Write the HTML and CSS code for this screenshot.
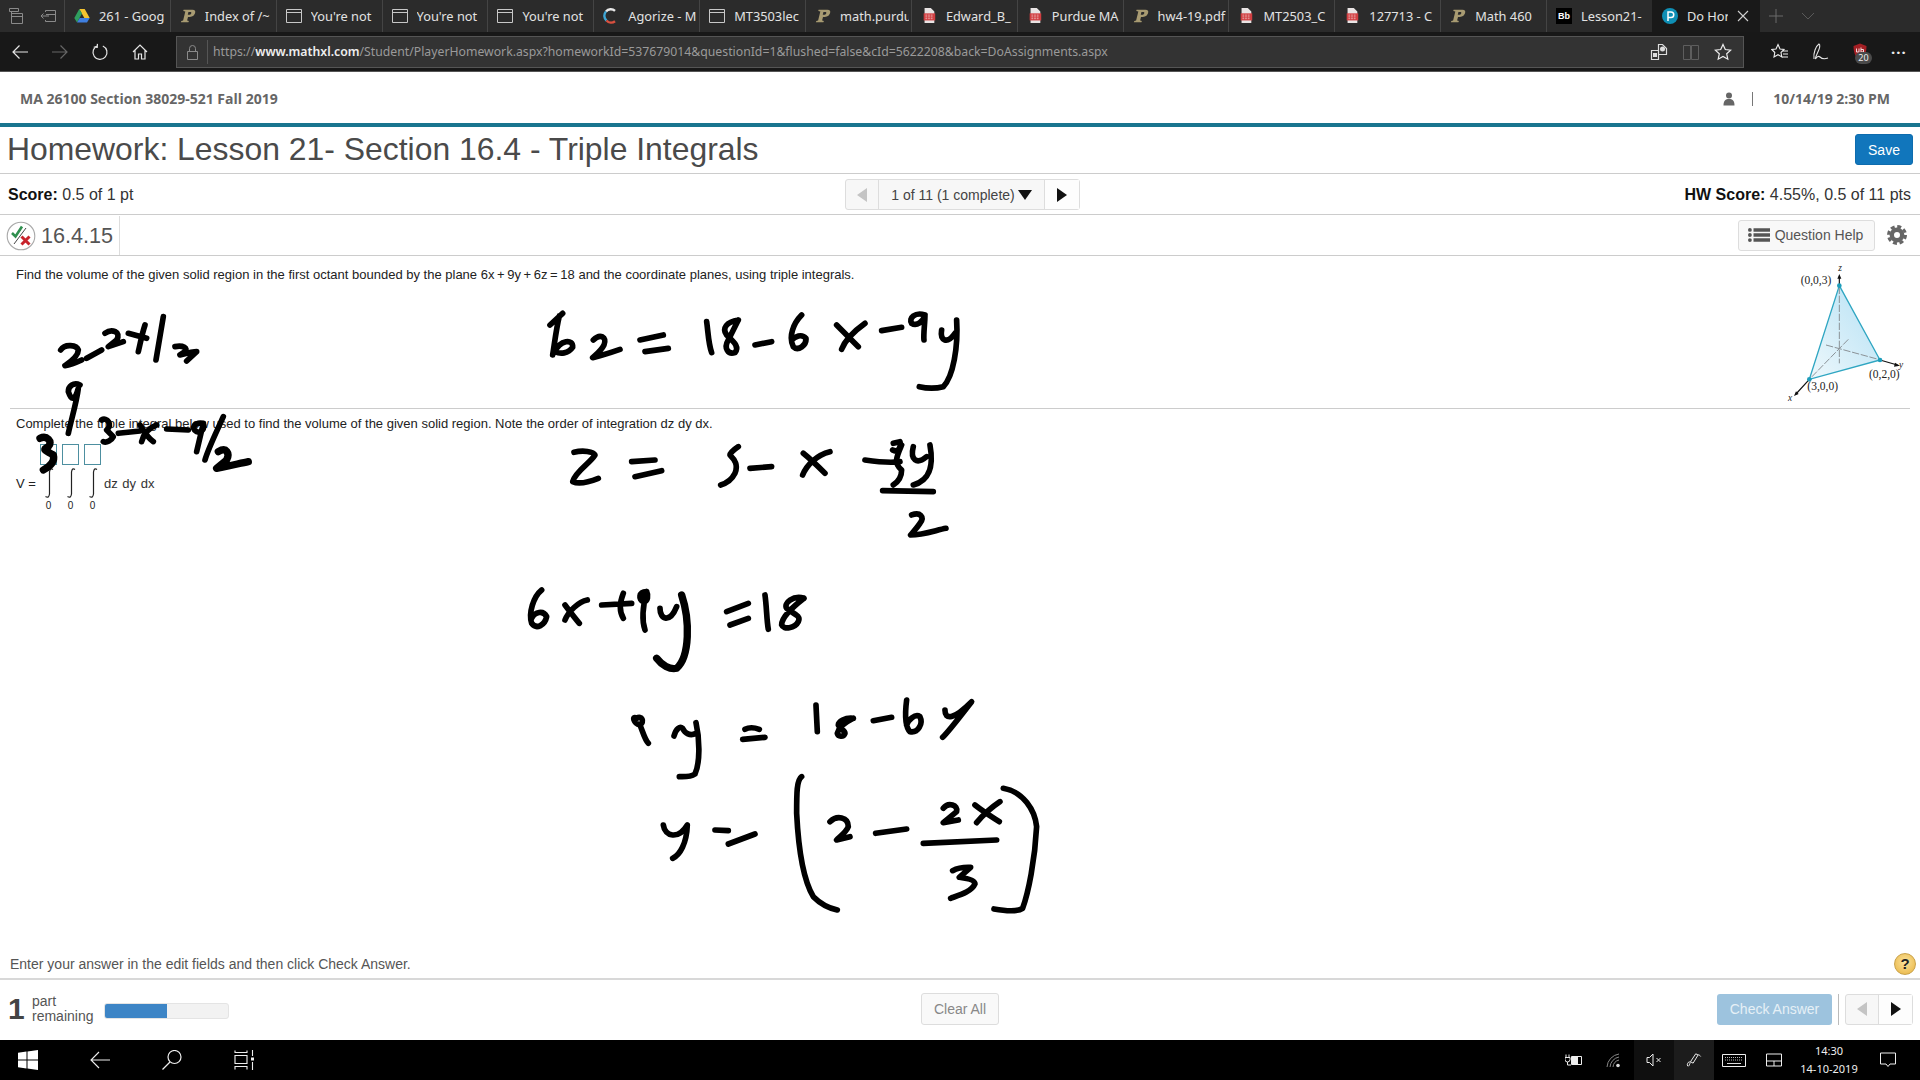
FILE: index.html
```html
<!DOCTYPE html>
<html lang="en">
<head>
<meta charset="utf-8">
<title>Do Homework</title>
<link rel="stylesheet" href="styles.css">
</head>
<body>
<svg class="defs" width="0" height="0" aria-hidden="true">
  <defs>
    <symbol id="i-window" viewBox="0 0 16 16"><path d="M.5 1.500h15v13H.5zM.5 4.500h15" fill="none" stroke="#c8c8c8"/></symbol>
    <symbol id="i-p" viewBox="0 0 18 16"><path d="M4 1h10c3 0 3.500 1.500 3 3.500S14.500 9 11 9H9l-1 4 2 .5-.5 1.500H1l.5-1.500 2 -.5L6 3 3.700 2.500z" fill="#a89b72"/><path d="M9.500 3.500l-.8 3h2.300c1.500 0 2.700-3 .7-3z" fill="#2b2b2b"/></symbol>
    <symbol id="i-pdf" viewBox="0 0 16 18"><path d="M3 0h7l4 4v13H3z" fill="#e9e4e4"/><rect x="2" y="6" width="13" height="8" fill="#d13f42"/><path d="M4 8h9M4 10h9M4 12h9" stroke="#f3c9c9" stroke-width=".8" stroke-dasharray="2 1"/></symbol>
  </defs>
</svg>

<header class="tabbar">
  <div class="tab-tools">
    <svg class="ic16" viewBox="0 0 16 16"><path d="M1.500 .5h9v3h-9zM3.500 3.500v9M3.500 5.500h11v10h-11zM3.500 8.500h11" fill="none" stroke="#8a8a8a"/></svg>
    <svg class="ic16" viewBox="0 0 16 16"><path d="M1 8h8M3.500 5.500L1 8l2.500 2.500M5.500 4V2.500h10v11h-10V12M6 6.500h9" fill="none" stroke="#8a8a8a"/></svg>
  </div>
  <div class="tab"><svg class="tab-ic" viewBox="0 0 16 16"><path d="M5.300 1h5.400l5 9h-5.400z" fill="#f4c430"/><path d="M5.300 1L.3 10l2.700 4.500 5-9z" fill="#2f9e5f"/><path d="M3 14.500h10l2.700-4.500H5.700z" fill="#3f7fe0"/></svg><span class="tab-name">261 - Goog</span></div>
  <div class="tab"><svg class="tab-ic"><use href="#i-p"/></svg><span class="tab-name">Index of /~</span></div>
  <div class="tab"><svg class="tab-ic"><use href="#i-window"/></svg><span class="tab-name">You're not</span></div>
  <div class="tab"><svg class="tab-ic"><use href="#i-window"/></svg><span class="tab-name">You're not</span></div>
  <div class="tab"><svg class="tab-ic"><use href="#i-window"/></svg><span class="tab-name">You're not</span></div>
  <div class="tab"><svg class="tab-ic" viewBox="0 0 16 16"><path d="M12 2.800A6.300 6.300 0 0 0 3 3.500" fill="none" stroke="#e8e8e8" stroke-width="2.400"/><path d="M3 3.500a6.300 6.300 0 0 0 .5 9" fill="none" stroke="#3fa7d6" stroke-width="2.400"/><path d="M3.500 12.500a6.300 6.300 0 0 0 8.500.8" fill="none" stroke="#d9503f" stroke-width="2.400"/></svg><span class="tab-name">Agorize - M</span></div>
  <div class="tab"><svg class="tab-ic"><use href="#i-window"/></svg><span class="tab-name">MT3503lec</span></div>
  <div class="tab"><svg class="tab-ic"><use href="#i-p"/></svg><span class="tab-name">math.purdu</span></div>
  <div class="tab"><svg class="tab-ic"><use href="#i-pdf"/></svg><span class="tab-name">Edward_B_</span></div>
  <div class="tab"><svg class="tab-ic"><use href="#i-pdf"/></svg><span class="tab-name">Purdue MA</span></div>
  <div class="tab"><svg class="tab-ic"><use href="#i-p"/></svg><span class="tab-name">hw4-19.pdf</span></div>
  <div class="tab"><svg class="tab-ic"><use href="#i-pdf"/></svg><span class="tab-name">MT2503_C</span></div>
  <div class="tab"><svg class="tab-ic"><use href="#i-pdf"/></svg><span class="tab-name">127713 - C</span></div>
  <div class="tab"><svg class="tab-ic"><use href="#i-p"/></svg><span class="tab-name">Math 460</span></div>
  <div class="tab"><span class="bb-ic">Bb</span><span class="tab-name">Lesson21-</span></div>
  <div class="tab tab-active"><svg class="tab-ic" viewBox="0 0 16 16"><circle cx="8" cy="8" r="8" fill="#0f8fb5"/><path d="M6 13V4h3a2.500 2.500 0 0 1 0 5.500H6" fill="none" stroke="#fff" stroke-width="1.500"/></svg><span class="tab-name">Do Hor</span><svg class="close-ic" viewBox="0 0 12 12"><path d="M1 1l10 10M11 1L1 11" stroke="#d0d0d0" stroke-width="1.100"/></svg></div>
  <div class="tab-new">
    <svg class="ic16" viewBox="0 0 16 16"><path d="M8 1v14M1 8h14" stroke="#6a6a6a" fill="none"/></svg>
    <svg class="ic16" viewBox="0 0 16 16"><path d="M2 5l6 6 6-6" stroke="#5a5a5a" fill="none"/></svg>
  </div>
</header>

<nav class="navbar">
  <div class="nav-btns">
    <svg class="ic18" viewBox="0 0 18 18"><path d="M17 9H2M8.500 2.500L2 9l6.500 6.500" fill="none" stroke="#e6e6e6" stroke-width="1.200"/></svg>
    <svg class="ic18" viewBox="0 0 18 18"><path d="M1 9h15M9.500 2.500L16 9l-6.500 6.500" fill="none" stroke="#666" stroke-width="1.200"/></svg>
    <svg class="ic18" viewBox="0 0 18 18"><path d="M6.500 2.800a7 7 0 1 0 5 0M6 1v3.500H2.500" fill="none" stroke="#e6e6e6" stroke-width="1.200" transform="rotate(3 9 9)"/></svg>
    <svg class="ic18" viewBox="0 0 18 18"><path d="M2 9l7-7 7 7M4 7.500V16h3.500v-5h3v5H14V7.500" fill="none" stroke="#e6e6e6" stroke-width="1.200"/></svg>
  </div>
  <div class="urlbar">
    <svg class="lock-ic" viewBox="0 0 11 16"><path d="M.5 7.500h10v8H.5zM2.500 7.500V4.500a3 3 0 0 1 6 0v3" fill="none" stroke="#8a8a8a"/></svg>
    <span class="url"><span>https://</span><b>www.mathxl.com</b><span>/Student/PlayerHomework.aspx?homeworkId=537679014&amp;questionId=1&amp;flushed=false&amp;cId=5622208&amp;back=DoAssignments.aspx</span></span>
    <div class="url-icons">
      <svg class="ic18" viewBox="0 0 18 18"><path d="M1.500 7.500h7v9h-7zM8.500 1.500h4l4 4v6h-8z" fill="none" stroke="#ddd" stroke-width="1.200"/><circle cx="12.500" cy="6" r="2.500" fill="#ddd"/><rect x="3" y="10" width="4" height="4" fill="#ddd"/></svg>
      <svg class="ic18" viewBox="0 0 18 18"><path d="M1.500 2.500h7v14h-7zM9.500 2.500h7v14h-7z" fill="none" stroke="#5e5e5e"/></svg>
      <svg class="ic18" viewBox="0 0 18 18"><path d="M9 1.500l2.300 5 5.400.6-4 3.700 1.100 5.400L9 13.500l-4.800 2.700 1.100-5.400-4-3.700 5.400-.6z" fill="none" stroke="#eee" stroke-width="1.200"/></svg>
    </div>
  </div>
  <div class="nav-ext">
    <svg class="ic18" viewBox="0 0 18 18"><path d="M7 1.500L9 6l4 .5-3 3 .8 4.500L7 11.700 3 14l.8-4.500-3-3L5 6zM12 8h5M12 11h5M11 14h6" fill="none" stroke="#eee" stroke-width="1.100"/></svg>
    <svg class="ic18" viewBox="0 0 18 18"><path d="M3 16C2 10 5 3 8 1c2 1 0 6-2 10-1 2-1.500 4-1.500 5 1.500-3 3.500-3 4.500-2 2 2 5 2 8 1" fill="none" stroke="#e6e6e6" stroke-width="1.100"/></svg>
    <span class="ublock"><svg class="ic18" viewBox="0 0 18 18"><path d="M2.500 3L9 .5 15.500 3c0 7-2 11.500-6.500 14.500C4.500 14.500 2.500 10 2.500 3z" fill="#a31f24"/><path d="M5.500 5.500v3.500h2.500V5.500M10 4.500V9h2.500V6.500H10" fill="none" stroke="#f2dede"/></svg><span class="ublock-count">20</span></span>
    <span class="more-dots">···</span>
  </div>
</nav>

<main class="page">
  <div class="course-bar">
    <span class="course-name">MA 26100 Section 38029-521 Fall 2019</span>
    <div class="course-meta">
      <svg class="person-ic" viewBox="0 0 12 14"><circle cx="6" cy="3.500" r="3" fill="#666"/><path d="M.5 13.500c0-5 2-6.500 5.500-6.500s5.500 1.500 5.500 6.500z" fill="#666"/></svg>
      <span class="meta-rule"></span>
      <span class="course-date">10/14/19 2:30 PM</span>
    </div>
  </div>

  <div class="title-row">
    <h1 class="hw-title">Homework: Lesson 21- Section 16.4 - Triple Integrals</h1>
    <button class="btn-save">Save</button>
  </div>

  <div class="score-row">
    <div class="score"><b>Score:</b> 0.5 of 1 pt</div>
    <div class="pager">
      <span class="pager-cell pager-prev"><i class="tri-left"></i></span>
      <span class="pager-label">1 of 11 (1 complete)<i class="tri-down"></i></span>
      <span class="pager-cell pager-next"><i class="tri-right"></i></span>
    </div>
    <div class="score score-right"><b>HW Score:</b> 4.55%, 0.5 of 11 pts</div>
  </div>

  <div class="question-row">
    <div class="question-id">
      <svg class="status-ic" viewBox="0 0 30 30"><circle cx="15" cy="15" r="13.800" fill="#fff" stroke="#a9a9a9" stroke-width="1.100"/><path d="M6 12l3.500 3.500L16 5.500" fill="none" stroke="#2f8f4f" stroke-width="2.600"/><path d="M8 23L20 7" stroke="#444" stroke-width="1"/><path d="M15.500 15.500l8 8M23.500 15.500l-8 8" stroke="#c8232c" stroke-width="3"/></svg>
      <span class="question-num">16.4.15</span>
    </div>
    <div class="question-tools">
      <button class="btn-help"><svg class="list-ic" viewBox="0 0 22 14"><circle cx="1.900" cy="1.900" r="1.900" fill="#555"/><circle cx="1.900" cy="7" r="1.900" fill="#555"/><circle cx="1.900" cy="12.100" r="1.900" fill="#555"/><path d="M5.500.2H22v3.600H5.500zM5.500 5.200H22v3.600H5.500zM5.500 10.200H22v3.600H5.500z" fill="#555"/></svg>Question Help</button>
      <svg class="gear-ic" viewBox="0 0 20 20"><circle cx="10" cy="10" r="8.500" fill="none" stroke="#666" stroke-width="3" stroke-dasharray="4 2.676"/><circle cx="10" cy="10" r="5.200" fill="none" stroke="#666" stroke-width="4.400"/></svg>
    </div>
  </div>

  <section class="question-body">
    <div class="part-one">
      <p class="q-text">Find the volume of the given solid region in the first octant bounded by the plane <span class="math-tight">6x + 9y + 6z = 18</span> and the coordinate planes, using triple integrals.</p>
      <svg class="figure" viewBox="255 405 360 420">
        <defs><linearGradient id="tetra" x1="1" y1="0" x2="0" y2="1"><stop offset="0" stop-color="#b4e0f4"/><stop offset="1" stop-color="#eef8fc"/></linearGradient></defs>
        <path d="M418 467L540 690 328 748z" fill="url(#tetra)" stroke="#2fa6c2" stroke-width="4"/>
        <path d="M418 470V700M378 645L535 688M445 628L332 744" fill="none" stroke="#8b9297" stroke-width="3" stroke-dasharray="22 5"/>
        <path d="M418 467V440M540 690L592 705M328 748L288 792" fill="none" stroke="#111" stroke-width="3.500"/>
        <path d="M418 432l-6 14h12zM600 707l-15-9-3 12zM282 798l14-6-8-8z" fill="#111"/>
        <circle cx="418" cy="467" r="7" fill="#1e9dbb"/><circle cx="540" cy="690" r="7" fill="#1e9dbb"/><circle cx="328" cy="748" r="7" fill="#1e9dbb"/>
        <g class="fig-label">
          <text x="302" y="463">(0,0,3)</text><text x="507" y="743">(0,2,0)</text><text x="322" y="780">(3,0,0)</text>
          <text class="fig-axis" x="415" y="424">z</text><text class="fig-axis" x="597" y="713">y</text><text class="fig-axis" x="264" y="813">x</text>
        </g>
      </svg>
    </div>
    <div class="part-two">
      <p class="q-text">Complete the triple integral below used to find the volume of the given solid region. Note the order of integration dz dy dx.</p>
      <div class="formula">
        <span class="formula-v">V =</span>
        <div class="int-col"><span class="ans-box"></span><svg class="int-sign" viewBox="0 0 10 30"><path d="M9 1.500C7 0 6 1 5.500 4v22c-.5 3-1.500 4-4 2.500" fill="none" stroke="#222" stroke-width="1.200"/></svg><span class="int-low">0</span></div>
        <div class="int-col"><span class="ans-box"></span><svg class="int-sign" viewBox="0 0 10 30"><path d="M9 1.500C7 0 6 1 5.500 4v22c-.5 3-1.500 4-4 2.500" fill="none" stroke="#222" stroke-width="1.200"/></svg><span class="int-low">0</span></div>
        <div class="int-col"><span class="ans-box"></span><svg class="int-sign" viewBox="0 0 10 30"><path d="M9 1.500C7 0 6 1 5.500 4v22c-.5 3-1.500 4-4 2.500" fill="none" stroke="#222" stroke-width="1.200"/></svg><span class="int-low">0</span></div>
        <span class="formula-d">dz dy dx</span>
      </div>
    </div>
    <div class="instr-row">
      <span class="instr">Enter your answer in the edit fields and then click Check Answer.</span>
      <span class="help-q">?</span>
    </div>
  </section>

  <footer class="action-row">
    <div class="parts">
      <span class="parts-num">1</span>
      <span class="parts-text">part<br>remaining</span>
      <span class="progress"><span class="progress-fill"></span></span>
    </div>
    <button class="btn-clear">Clear All</button>
    <div class="actions">
      <button class="btn-check">Check Answer</button>
      <span class="action-rule"></span>
      <div class="pager pager-small">
        <span class="pager-cell pager-prev"><i class="tri-left"></i></span>
        <span class="pager-cell pager-next"><i class="tri-right"></i></span>
      </div>
    </div>
  </footer>
</main>

<div class="taskbar">
  <div class="task-left">
    <svg class="task-ic" viewBox="0 0 20 20"><path d="M0 2.800L8.500 1.600v8H0zM9.500 1.500L20 0v9.600H9.500zM0 10.500h8.500v8L0 17.200zM9.500 10.500H20V20L9.500 18.500z" fill="#fff"/></svg>
    <svg class="task-ic" viewBox="0 0 20 20"><path d="M20 10H1M9 2l-8 8 8 8" fill="none" stroke="#eee" stroke-width="1.100"/></svg>
    <svg class="task-ic" viewBox="0 0 20 20"><circle cx="12.500" cy="7" r="6.500" fill="none" stroke="#eee" stroke-width="1.200"/><path d="M8 12l-7.500 7.500" stroke="#eee" stroke-width="1.300"/></svg>
    <svg class="task-ic" viewBox="0 0 20 20"><path d="M1 .5v2h12v-2M1 5.500h12v8H1zM1 19.500v-3h12v3M18.500 0v6M18.500 12v8" fill="none" stroke="#eee" stroke-width="1.100"/><rect x="17" y="7.500" width="3" height="3" fill="#eee"/></svg>
  </div>
  <div class="tray">
    <span class="tray-cell"><svg class="tray-wide" viewBox="0 0 18 12"><path d="M1 .5v3M4 .5v3M0 3.500h5v2a2.500 2.500 0 0 1-5 0zM2.500 8v3H6" fill="none" stroke="#eee"/><path d="M6.500 2.500h10v8h-10z" fill="none" stroke="#eee"/><rect x="7" y="3" width="6" height="7" fill="#eee"/></svg></span>
    <span class="tray-cell"><svg class="tray-ic" viewBox="0 0 16 16"><path d="M1 15A14 14 0 0 1 13 2M4 15A11 11 0 0 1 13 5M7 15a8 8 0 0 1 6-7" fill="none" stroke="#888"/><circle cx="12" cy="13.500" r="1.800" fill="#ddd"/></svg></span>
    <span class="tray-cell tray-dim"><svg class="tray-ic" viewBox="0 0 16 16"><path d="M1 5.500h2.500L7 2v12l-3.500-3.500H1zM10.500 6l4 4M14.500 6l-4 4" fill="none" stroke="#eee"/></svg></span>
    <span class="tray-cell tray-on"><svg class="tray-ic" viewBox="0 0 18 18"><path d="M2 16c-1.500-2 .5-5 2-5 1.500.5 0 3-1 5M5 11L11 2l2.500 1.500L8 12.500zM13 3c1.500 0 3 1 3.500 2" fill="none" stroke="#eee" stroke-width="1.100"/></svg></span>
    <span class="tray-cell"><svg class="kbd-ic" viewBox="0 0 24 13"><path d="M.5.5h23v12H.5z" fill="none" stroke="#eee"/><path d="M3 3.500h18M3 6h18" stroke="#bbb" stroke-dasharray="1 1"/><path d="M5 9.500h14" stroke="#ddd"/></svg></span>
    <span class="tray-cell"><svg class="tray-ic" viewBox="0 0 16 13"><path d="M.5.5h15v12H.5zM.5 7.500h15M8 7.500v5" fill="none" stroke="#eee"/></svg></span>
    <span class="clock"><span>14:30</span><span>14-10-2019</span></span>
    <span class="tray-cell tray-last"><svg class="tray-ic" viewBox="0 0 16 15"><path d="M.5.500h15v11h-5.500L8 14l-2-2.500H.5z" fill="none" stroke="#eee"/></svg></span>
  </div>
</div>

<svg class="ink" viewBox="0 0 1920 1080" role="img" aria-label="Handwritten working over the page">
  <g transform="translate(500 290) scale(.3333)">
    <path d="M188 70L150 105M158 195C165 150 170 110 178 78M165 185C180 150 220 145 218 172C205 192 180 192 165 185"/>
    <path d="M280 150C300 130 322 140 312 165C302 185 285 195 278 203C310 195 340 185 360 178"/>
    <path d="M420 150L490 135M435 185L505 175"/>
    <path d="M620 95C625 130 625 160 635 188M715 90C680 95 665 115 680 135C700 155 720 170 705 188C685 195 670 175 685 150C695 130 705 110 715 90"/>
    <path d="M765 165L815 155M905 75C880 100 865 140 880 170C895 185 920 165 918 145C905 130 885 140 875 150"/>
    <path d="M1010 105C1035 130 1055 150 1075 170M1095 100C1060 125 1035 150 1025 178M1145 122L1205 112"/>
    <path d="M1275 75C1245 65 1225 85 1235 100C1250 110 1270 95 1275 75C1275 100 1270 130 1272 150"/>
    <path d="M1325 120C1320 150 1340 165 1365 130M1370 90C1375 170 1360 260 1330 290C1310 295 1280 295 1258 290"/>

    <path d="M222 487C250 480 280 485 285 495C270 520 225 545 218 575C240 585 270 575 295 565M395 515L465 510M405 560L485 542"/>
    <path d="M715 470C700 480 690 490 690 495C705 510 715 525 705 550C695 570 680 580 662 585M750 535L815 530"/>
    <path d="M910 490C935 510 955 530 975 550M990 485C950 495 920 525 908 555M1095 510C1130 515 1165 520 1200 515"/>
    <path d="M1180 460L1200 455C1205 470 1195 490 1178 480M1205 465C1190 500 1180 520 1205 540C1205 560 1195 575 1180 585"/>
    <path d="M1240 470C1230 510 1250 525 1280 500M1290 465C1300 520 1295 570 1240 585M1148 602L1300 605"/>
    <path d="M1235 675C1260 665 1275 680 1260 700C1250 715 1240 725 1232 735C1270 735 1310 720 1338 715"/>

    <path d="M125 900C100 920 85 970 95 1000C110 1020 135 1005 140 980C130 960 105 965 95 985M195 945C210 965 225 985 238 1000M262 930C235 935 205 965 195 990"/>
    <path d="M305 945L395 940M370 910C360 935 355 960 370 985M440 905C415 905 415 930 430 935C445 935 445 915 440 905C428 950 425 990 435 1020"/>
    <path d="M480 955C480 990 510 1000 530 950"/><path class="ink-bold" d="M545 915C570 990 570 1100 530 1135C510 1140 485 1125 470 1105"/>
    <path d="M680 965L745 940M690 1005L745 985M795 915C800 950 800 990 805 1018M912 925C880 915 850 940 860 955C875 970 905 975 895 995C885 1015 850 1020 845 1005C845 980 880 950 912 925"/>
  </g>
  <g transform="translate(600 680) scale(.3333)">
    <path d="M110 115C95 105 100 130 120 135C135 125 125 105 110 115M120 135C130 160 135 180 145 190"/>
    <path d="M222 168C228 145 240 138 248 145C255 160 270 170 288 160M288 128C300 180 300 250 285 282C270 292 250 290 238 290M435 148C450 140 470 145 478 148M428 178L495 172"/>
    <path d="M648 75L652 155M760 115C735 112 715 125 715 135C720 150 735 150 735 160C730 172 715 170 712 160C715 145 730 130 760 115M820 122L875 112"/>
    <path d="M920 60C915 100 915 140 930 155C955 160 970 130 960 110C945 100 925 120 920 135M1035 90C1035 120 1060 120 1115 65C1080 110 1050 150 1028 172"/>
    <path d="M190 435C195 470 235 480 262 435C260 490 240 525 218 535M345 450L385 452M385 492L465 462"/>
    <path d="M605 290C590 300 590 340 590 400C595 500 610 600 640 650C660 670 690 685 712 690"/>
    <path d="M690 425C710 405 745 410 745 440C740 455 720 470 710 480L750 470M827 460L920 447"/>
    <path d="M1030 385C1045 365 1075 375 1070 395L1030 428L1075 420M1125 375C1150 395 1175 410 1198 425M1200 365C1170 385 1145 410 1130 428M970 490L1190 480"/>
    <path d="M1058 572C1080 560 1100 562 1112 562L1078 592C1100 595 1125 600 1125 612C1115 635 1080 645 1052 655"/>
    <path d="M1210 325C1270 335 1305 390 1310 440C1305 540 1285 640 1268 685C1250 697 1210 692 1182 687"/>
  </g>
  <g transform="translate(0 125) scale(.3333)">
    <path d="M182 675C195 655 230 660 235 675C235 695 205 715 195 722C210 720 230 712 245 705M260 700L305 675"/>
    <path d="M315 625C335 610 365 620 350 645L325 665L370 650M385 625L440 640M435 600C425 630 420 660 415 680M490 575L468 705"/>
    <path d="M525 665C550 660 565 670 555 680L540 690C560 685 580 680 590 680L560 708"/>
    <path d="M240 780C220 770 205 785 205 800C215 830 225 825 235 790C230 830 215 880 205 925"/>
    <path class="ink-bold" d="M120 940C140 930 160 950 145 965C125 975 135 975 160 990C165 1010 150 1025 130 1035"/>
    <path d="M305 885C320 875 340 900 320 915L340 935C335 945 320 955 310 950M355 925L420 918"/>
    <path d="M420 900C435 925 445 940 460 950M470 900C445 910 430 930 425 950M500 912L565 915"/>
    <path d="M610 895C585 890 570 910 590 920C605 925 615 910 610 895L590 980M670 875C650 920 625 970 615 1005"/>
    <path class="ink-bold" d="M655 980C680 965 690 985 680 1005L650 1030C680 1025 720 1015 745 1010"/>
  </g>
</svg>
</body>
</html>
```
FILE: styles.css
```css
* { box-sizing: border-box; }
html, body { height: 100%; }
body {
  margin: 0;
  width: 1920px;
  height: 1080px;
  overflow: hidden;
  display: flex;
  flex-direction: column;
  position: relative;
  background: #fff;
  font-family: "Liberation Sans", Arial, sans-serif;
  color: #222;
}
.defs { position: absolute; }
button { font-family: inherit; cursor: default; }
p { margin: 0; }
h1 { margin: 0; font-weight: 400; }

/* browser chrome */
.tabbar {
  height: 32px;
  flex: none;
  display: flex;
  background: #2b2b2b;
  font-family: "Noto Sans", sans-serif;
  font-size: 12.800px;
  color: #e2e2e2;
}
.tab-tools { width: 64px; display: flex; align-items: center; gap: 16px; padding-left: 8px; flex: none; }
.tab {
  width: 105.870px;
  flex: none;
  display: flex;
  align-items: center;
  gap: 9px;
  padding: 0 2px 1px 9px;
  border-left: 1px solid #444;
}
.tab-name { flex: 1; overflow: hidden; white-space: nowrap; min-width: 0; }
.tab-ic { width: 16px; height: 16px; flex: none; }
.bb-ic {
  width: 16px; height: 16px; flex: none; background: #000; color: #fff;
  font: 700 9px/16px "Liberation Sans", sans-serif; text-align: center;
}
.tab-active { width: 108px; background: #191919; border-left: 0; padding-left: 10px; gap: 9px; padding-right: 11px; }
.close-ic { width: 12px; height: 12px; flex: none; }
.tab-new { display: flex; align-items: center; gap: 16px; padding-left: 8px; }
.ic16 { width: 16px; height: 16px; display: block; flex: none; }
.ic18 { width: 18px; height: 18px; display: block; flex: none; }

.navbar {
  height: 40px;
  flex: none;
  display: flex;
  align-items: center;
  background: #181818;
  border-bottom: 1px solid #555;
}
.nav-btns { width: 176px; display: flex; align-items: center; gap: 22px; padding-left: 11px; flex: none; }
.urlbar {
  width: 1568px;
  height: 32px;
  flex: none;
  display: flex;
  align-items: center;
  background: #333;
  border: 1px solid #555;
  padding: 0 11px 0 10px;
}
.lock-ic { width: 11px; height: 16px; flex: none; margin-right: 9px; }
.url {
  flex: 1;
  border-left: 1px solid #555;
  padding-left: 5px;
  font: 12.250px/24px "Noto Sans", sans-serif;
  color: #9a9a9a;
  white-space: nowrap;
  overflow: hidden;
}
.url b { color: #eee; font-weight: 600; }
.url-icons { display: flex; gap: 14px; align-items: center; }
.nav-ext { flex: 1; display: flex; align-items: center; gap: 22px; padding-left: 27px; }
.ublock { position: relative; width: 18px; height: 18px; }
.ublock-count {
  position: absolute; left: 4px; top: 9px; width: 17px; height: 12px; border-radius: 6px;
  background: #4a4a4a; color: #eee; font: 9px/12px "Noto Sans", sans-serif; text-align: center;
}
.more-dots { color: #eee; font: 700 15px/18px "Noto Sans", sans-serif; letter-spacing: 1px; }

/* page */
.page { flex: 1; display: flex; flex-direction: column; min-height: 0; }
.course-bar {
  height: 55px;
  flex: none;
  display: flex;
  align-items: center;
  justify-content: space-between;
  padding: 2px 30px 0 20px;
  border-bottom: 4px solid #19758f;
  font-family: "Open Sans", sans-serif;
  font-weight: 700;
  font-size: 14px;
  color: #666;
}
.course-meta { display: flex; align-items: center; }
.person-ic { width: 12px; height: 14px; margin-right: 17px; }
.meta-rule { width: 1px; height: 14px; background: #777; margin-right: 20px; }

.title-row {
  height: 47px;
  flex: none;
  display: flex;
  align-items: center;
  justify-content: space-between;
  padding: 0 7px 1px 7px;
  border-bottom: 1px solid #ccc;
}
.hw-title { font-size: 31.900px; color: #4a4a4a; line-height: 36px; margin-bottom: 2px; }
.btn-save {
  width: 58px; height: 31px;
  background: #1176bc;
  border: 1px solid #0e6cae;
  border-radius: 3px;
  color: #fff;
  font-size: 14px;
  padding: 0;
}
.score-row {
  height: 41px;
  flex: none;
  display: grid;
  grid-template-columns: 837px 235px 1fr;
  align-items: center;
  padding: 1px 9px 0 8px;
  border-bottom: 1px solid #ccc;
}
.score { font-size: 16px; color: #333; }
.score b { color: #111; }
.score-right { text-align: right; }
.pager {
  display: flex;
  height: 31px;
  border: 1px solid #ddd;
  border-radius: 3px;
  background: #f7f7f7;
  font-size: 14px;
  color: #444;
  justify-self: center;
  width: 235px;
}
.pager-cell { display: flex; align-items: center; justify-content: center; flex: none; }
.pager-prev { width: 33px; border-right: 1px solid #ddd; }
.pager-next { flex: 1; background: #fdfdfd; }
.pager-label {
  width: 166px; flex: none; display: flex; align-items: center; justify-content: center; gap: 3px;
  border-right: 1px solid #ddd;
}
.tri-left { width: 0; height: 0; border: 8px solid transparent; border-left: 0; border-right: 10px solid #c4c4c4; border-top-width: 7.500px; border-bottom-width: 7.500px; }
.tri-right { width: 0; height: 0; border: 8px solid transparent; border-right: 0; border-left: 10px solid #111; border-top-width: 7.500px; border-bottom-width: 7.500px; }
.tri-down { width: 0; height: 0; border: 7px solid transparent; border-bottom: 0; border-top: 10px solid #111; }

.question-row {
  height: 41px;
  flex: none;
  display: flex;
  align-items: stretch;
  justify-content: space-between;
  border-bottom: 1px solid #ccc;
}
.question-id {
  display: flex;
  align-items: center;
  width: 120px;
  margin: 1px 0 0;
  padding-left: 6px;
  gap: 5px;
  border-right: 1px solid #ddd;
}
.status-ic { width: 30px; height: 30px; flex: none; }
.question-num { font-size: 21.600px; color: #555; }
.question-tools { display: flex; align-items: center; padding-right: 13px; }
.btn-help {
  width: 137px; height: 31px;
  display: flex; align-items: center; justify-content: center; gap: 5px;
  background: #f8f8f8;
  border: 1px solid #ddd;
  border-radius: 3px;
  color: #555;
  font-size: 14px;
  padding: 0 2px 0 0;
  margin-right: 12px;
}
.list-ic { width: 22px; height: 14px; }
.gear-ic { width: 20px; height: 20px; margin-top: -1px; }

.question-body { flex: 1; display: flex; flex-direction: column; min-height: 0; }
.part-one {
  height: 153px;
  flex: none;
  margin: 0 10px;
  display: flex;
  justify-content: space-between;
  align-items: flex-start;
  padding: 11px 5px 0 6px;
  border-bottom: 1px solid #ccc;
}
.q-text { font-size: 13px; line-height: 15px; color: #222; }
.math-tight { word-spacing: -1px; }
.figure { width: 120px; height: 140px; margin-top: -2px; }
.fig-label text { font-family: "Liberation Serif", serif; font-size: 34.500px; fill: #222; }
.fig-label .fig-axis { font-style: italic; font-size: 28px; }

.part-two { padding: 7px 16px 0; flex: none; }
.formula { display: flex; align-items: flex-start; margin-top: 13px; font-size: 13px; }
.formula-v { width: 24px; margin-top: 33px; line-height: 14px; }
.int-col { width: 17px; margin-right: 5px; display: flex; flex-direction: column; align-items: center; flex: none; }
.ans-box { width: 17px; height: 21px; border: 1px solid #4d8fa0; display: block; background: #fff; }
.int-sign { width: 10px; height: 30px; margin-top: 3px; display: block; }
.int-low { font-size: 10px; line-height: 12px; margin-top: 2px; }
.formula-d { margin: 33px 0 0 -2px; line-height: 14px; color: #333; word-spacing: 1px; }

.instr-row {
  margin-top: auto;
  height: 30px;
  display: flex;
  align-items: center;
  justify-content: space-between;
  padding: 2px 4px 0 10px;
  flex: none;
}
.instr { font-size: 14px; color: #555; }
.help-q {
  width: 22px; height: 22px; border-radius: 50%;
  background: radial-gradient(circle at 50% 40%, #fbe39c, #e8b23e);
  border: 1px solid #c9a24a;
  color: #222;
  font: 700 15px/20px "Liberation Sans", sans-serif;
  text-align: center;
}

.action-row {
  height: 62px;
  flex: none;
  display: grid;
  grid-template-columns: 1fr auto 1fr;
  align-items: center;
  padding: 0 7px 2px 8px;
  border-top: 2px solid #d8d8d8;
}
.parts { display: flex; align-items: center; }
.parts-num { font-size: 30px; font-weight: 700; color: #444; width: 24px; }
.parts-text { font-size: 14px; line-height: 15px; color: #555; width: 72px; margin-top: -1px; }
.progress { width: 125px; height: 16px; background: #f2f2f2; border: 1px solid #e4e4e4; border-radius: 3px; overflow: hidden; display: block; margin-top: 3px; }
.progress-fill { display: block; height: 100%; width: 50%; background: #3d85c6; }
.btn-clear {
  width: 78px; height: 32px;
  background: #f9f9f9;
  border: 1px solid #ddd;
  border-radius: 3px;
  color: #888;
  font-size: 14px;
  padding: 0;
  margin-right: 1px;
}
.actions { display: flex; align-items: center; justify-content: flex-end; }
.btn-check {
  width: 115px; height: 31px;
  background: #9dc3de;
  border: 0;
  border-radius: 3px;
  color: #e6f0f6;
  font-size: 14px;
  padding: 0;
}
.action-rule { width: 1px; height: 31px; background: #bbb; margin: 0 6px; }
.pager-small { width: 68px; justify-self: end; }

/* taskbar */
.taskbar {
  height: 40px;
  flex: none;
  display: flex;
  align-items: center;
  justify-content: space-between;
  background: #000;
}
.task-left { display: flex; align-items: center; gap: 52px; padding-left: 18px; }
.task-ic { width: 20px; height: 20px; display: block; }
.tray { display: flex; align-items: stretch; height: 40px; padding-right: 8px; }
.tray-cell { width: 40px; display: flex; align-items: center; justify-content: center; }
.tray-dim { background: #0f0f0f; }
.tray-on { background: #1c1c1c; }
.tray-ic { width: 16px; height: 16px; display: block; }
.tray-wide { width: 18px; height: 12px; display: block; }
.kbd-ic { width: 24px; height: 13px; display: block; }
.clock {
  width: 70px;
  display: flex; flex-direction: column; align-items: center; justify-content: center;
  font: 11px/18px "Noto Sans", sans-serif;
  color: #eee;
}
.tray-last { width: 48px; }

/* handwriting layer over the page */
.ink {
  position: absolute;
  left: 0; top: 0;
  width: 1920px; height: 1080px;
  pointer-events: none;
}
.ink path {
  fill: none;
  stroke: #000;
  stroke-width: 17;
  stroke-linecap: round;
  stroke-linejoin: round;
}
.ink .ink-bold { stroke-width: 22; }
```
